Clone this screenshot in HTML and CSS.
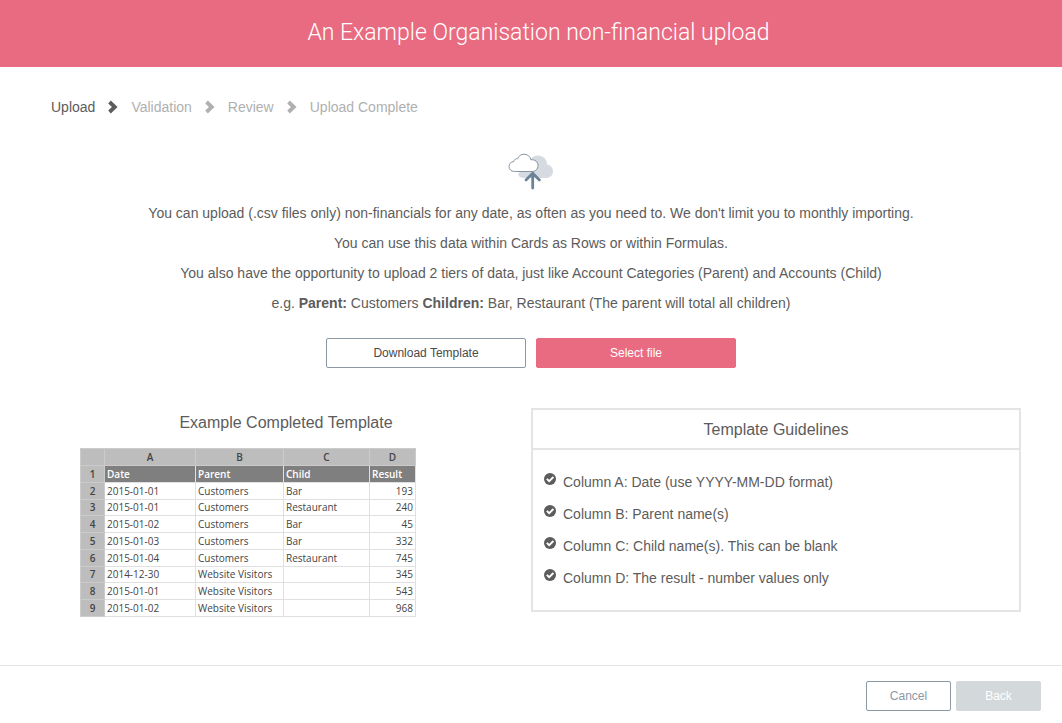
FILE: index.html
```html
<!DOCTYPE html>
<html lang="en">
<head>
  <meta charset="UTF-8">
  <meta name="viewport" content="width=device-width, initial-scale=1">
  <title>Non-financial upload</title>
  <link rel="stylesheet" href="styles.css">
</head>
<body>
  <svg width="0" height="0" class="defs" aria-hidden="true">
    <symbol id="chevron" viewBox="0 0 10 14">
      <path d="M1.500 2 L6.800 7 L1.500 12" fill="none" stroke="currentColor" stroke-width="3.800"/>
    </symbol>
    <symbol id="check" viewBox="0 0 12 12">
      <circle cx="6" cy="6" r="6" fill="currentColor"/>
      <path d="M2.8 5.8 L5.2 8.2 L9.4 4" fill="none" stroke="#fff" stroke-width="1.9"/>
    </symbol>
  </svg>

  <header class="page-header">
    <h1>An Example Organisation non-financial upload</h1>
  </header>

  <main class="content">
    <ol class="steps">
      <li class="active">Upload</li>
      <li><svg class="chevron active"><use href="#chevron"/></svg>Validation</li>
      <li><svg class="chevron"><use href="#chevron"/></svg>Review</li>
      <li><svg class="chevron"><use href="#chevron"/></svg>Upload Complete</li>
    </ol>

    <section class="intro">
      <svg class="cloud" viewBox="0 0 46 38" aria-hidden="true">
        <path d="M10 21 C11 24 13 25 16 25 H37.500 C42 25 45 22.500 45 18.500 C45 14.500 42.500 12 39 11.500 C39 6 35 2.500 30 2.500 C27.500 2.500 25 3.500 23.500 5 Z" fill="#d5dbe0"/>
        <path d="M6.500 18.500 C3 18.500 1 16.300 1 13.600 C1 10.800 3 8.800 5.700 8.600 C6.200 6.400 8 5.400 9.700 5.700 C10.700 2.800 13.300 1.200 16 1.200 C19.700 1.200 22.200 3.600 22.900 6.800 C27 6.200 30 9 30 12.600 C30 16 27.500 18.500 24 18.500 Z" fill="#fff" stroke="#8495a5" stroke-width="1"/>
        <path d="M24.700 35 V21 M18 27 L24.700 20.300 L31.400 27" fill="none" stroke="#6b8297" stroke-width="2.800" stroke-linecap="round" stroke-linejoin="round"/>
      </svg>
      <p>You can upload (.csv files only) non-financials for any date, as often as you need to. We don't limit you to monthly importing.</p>
      <p>You can use this data within Cards as Rows or within Formulas.</p>
      <p>You also have the opportunity to upload 2 tiers of data, just like Account Categories (Parent) and Accounts (Child)</p>
      <p>e.g. <strong>Parent:</strong> Customers <strong>Children:</strong> Bar, Restaurant (The parent will total all children)</p>
      <div class="actions">
        <button type="button" class="btn btn-outline">Download Template</button>
        <button type="button" class="btn btn-primary">Select file</button>
      </div>
    </section>

    <div class="columns">
      <section class="example">
        <h2>Example Completed Template</h2>
        <table class="sheet">
          <colgroup>
            <col class="col-num"><col class="col-a"><col class="col-b"><col class="col-c"><col class="col-d">
          </colgroup>
          <thead>
            <tr><th></th><th>A</th><th>B</th><th>C</th><th>D</th></tr>
          </thead>
          <tbody>
            <tr class="titles"><th>1</th><td>Date</td><td>Parent</td><td>Child</td><td>Result</td></tr>
            <tr><th>2</th><td>2015-01-01</td><td>Customers</td><td>Bar</td><td>193</td></tr>
            <tr><th>3</th><td>2015-01-01</td><td>Customers</td><td>Restaurant</td><td>240</td></tr>
            <tr><th>4</th><td>2015-01-02</td><td>Customers</td><td>Bar</td><td>45</td></tr>
            <tr><th>5</th><td>2015-01-03</td><td>Customers</td><td>Bar</td><td>332</td></tr>
            <tr><th>6</th><td>2015-01-04</td><td>Customers</td><td>Restaurant</td><td>745</td></tr>
            <tr><th>7</th><td>2014-12-30</td><td>Website Visitors</td><td></td><td>345</td></tr>
            <tr><th>8</th><td>2015-01-01</td><td>Website Visitors</td><td></td><td>543</td></tr>
            <tr><th>9</th><td>2015-01-02</td><td>Website Visitors</td><td></td><td>968</td></tr>
          </tbody>
        </table>
      </section>

      <section class="guidelines">
        <h2>Template Guidelines</h2>
        <ul>
          <li><svg class="check"><use href="#check"/></svg>Column A: Date (use YYYY-MM-DD format)</li>
          <li><svg class="check"><use href="#check"/></svg>Column B: Parent name(s)</li>
          <li><svg class="check"><use href="#check"/></svg>Column C: Child name(s). This can be blank</li>
          <li><svg class="check"><use href="#check"/></svg>Column D: The result - number values only</li>
        </ul>
      </section>
    </div>
  </main>

  <footer class="page-footer">
    <button type="button" class="btn btn-small btn-cancel">Cancel</button>
    <button type="button" class="btn btn-small btn-back" disabled>Back</button>
  </footer>
</body>
</html>
```

FILE: styles.css
```css
* {
  box-sizing: border-box;
}
body {
  margin: 0;
  background: #fff;
  color: #5c5c5c;
  font-family: "Liberation Sans", Arial, sans-serif;
  font-size: 14px;
  line-height: 20px;
}
h1, h2, p, ol, ul {
  margin: 0;
  padding: 0;
}
ol, ul {
  list-style: none;
}
.defs {
  position: absolute;
}

.page-header {
  padding: 17px 0 18px 15px;
  background: #e96b81;
  color: #fff;
  text-align: center;
}
.page-header h1 {
  font-family: Roboto, "Liberation Sans", sans-serif;
  font-size: 23px;
  font-weight: 300;
  line-height: 32px;
}

.content {
  padding: 30px 41px 48px;
}
.steps {
  display: flex;
  padding-left: 10px;
  color: #b0b0b0;
}
.steps li {
  display: flex;
  align-items: center;
}
.steps .active {
  color: #5c5c5c;
}
.chevron {
  width: 10px;
  height: 14px;
  margin: 0 13px;
}

.intro {
  margin-top: 36px;
  text-align: center;
}
.cloud {
  display: block;
  width: 46px;
  height: 38px;
  margin: 0 auto 12px;
}
.intro p {
  margin-bottom: 10px;
}
.actions {
  display: flex;
  justify-content: center;
  gap: 10px;
  margin-top: 25px;
}

.btn {
  width: 200px;
  height: 30px;
  padding: 0;
  border: 1px solid #8c98a4;
  border-radius: 2px;
  background: #fff;
  color: #4a4a4a;
  font: 12px "Liberation Sans", Arial, sans-serif;
}
.btn-primary {
  border-color: #e96b81;
  background: #e96b81;
  color: #fff;
}
.btn-small {
  width: 85px;
}
.btn-cancel {
  color: #8c98a4;
}
.btn-back {
  border-color: #d3d8db;
  background: #d3d8db;
  color: #fff;
}

.columns {
  display: grid;
  grid-template-columns: 1fr 1fr;
  align-items: start;
  margin-top: 40px;
}
.columns h2 {
  font-size: 16px;
  font-weight: normal;
  line-height: 20px;
  text-align: center;
}
.example {
  padding-top: 5px;
}
.sheet {
  width: 335px;
  height: 169px;
  margin: 15px 0 0 39px;
  border-collapse: collapse;
  table-layout: fixed;
  color: #444;
  font-family: "Trebuchet MS", "Open Sans", sans-serif;
  font-size: 10px;
  line-height: 14px;
}
.col-num { width: 24px; }
.col-a { width: 91px; }
.col-b { width: 88px; }
.col-c { width: 86px; }
.col-d { width: 46px; }
.sheet th,
.sheet td {
  padding: 0 2px;
  border: 1px solid #e0e0e0;
  text-align: left;
  white-space: nowrap;
}
.sheet th {
  border-color: #cbcbcb;
  background: #bdbdbd;
  text-align: center;
  font-weight: 600;
}
.sheet thead th {
  height: 17px;
}
.sheet td:last-child {
  text-align: right;
}
.sheet .titles td {
  background: #7f7f7f;
  color: #fff;
  font-weight: 600;
  text-align: left;
}

.guidelines {
  border: 2px solid #e4e4e4;
}
.guidelines h2 {
  padding: 10px 0 8px;
  border-bottom: 2px solid #e4e4e4;
}
.guidelines ul {
  padding: 16px 11px;
}
.guidelines li {
  display: flex;
  gap: 7px;
  line-height: 32px;
}
.check {
  width: 12px;
  height: 12px;
  margin-top: 7px;
}

.page-footer {
  display: flex;
  justify-content: flex-end;
  gap: 5px;
  padding: 15px 21px 12px;
  border-top: 1px solid #e4e4e4;
}
```
